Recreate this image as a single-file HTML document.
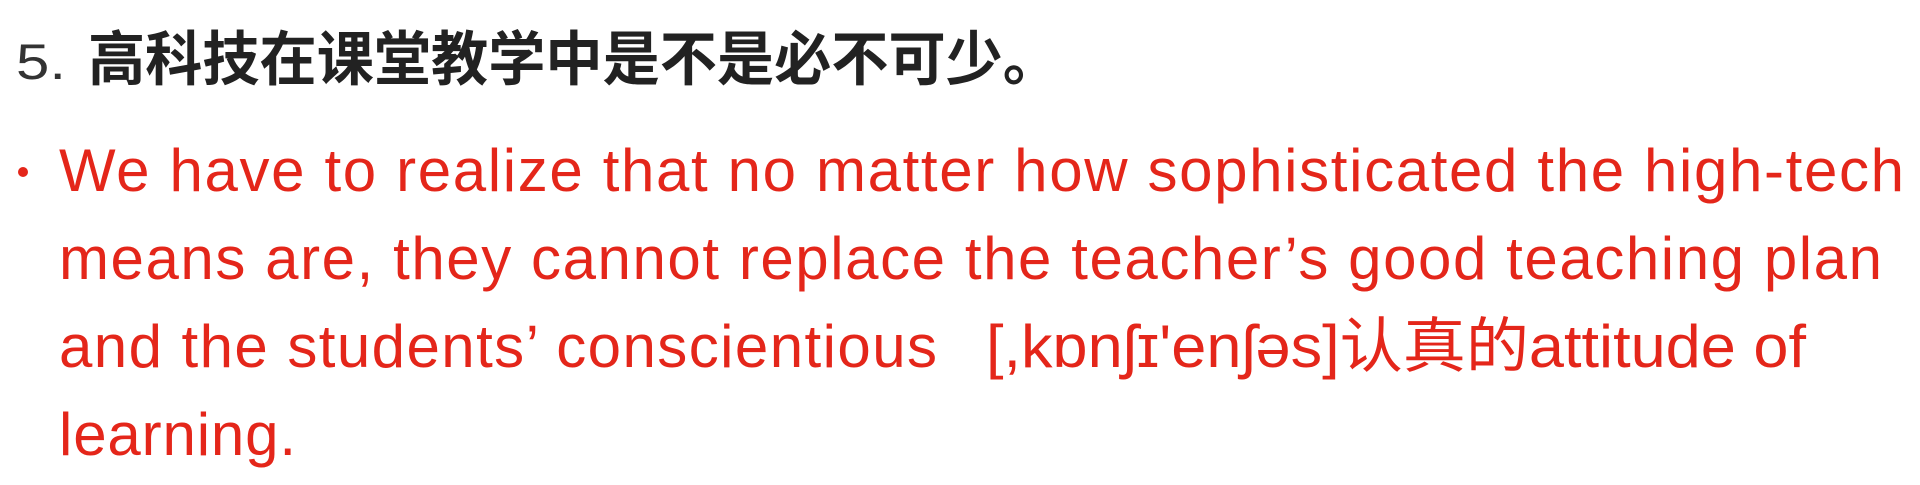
<!DOCTYPE html>
<html><head><meta charset="utf-8"><style>
html,body{margin:0;padding:0;background:#fff;width:1920px;height:485px;overflow:hidden}
svg{display:block}
</style></head><body>
<svg width="1920" height="485" viewBox="0 0 1920 485" xmlns="http://www.w3.org/2000/svg">
<g font-family="'Liberation Sans','Noto Sans CJK SC',sans-serif">
<text x="16" y="79" font-size="50" fill="#333" textLength="50" lengthAdjust="spacingAndGlyphs">5.</text>
<text x="88" y="80" font-size="59" font-weight="bold" fill="#222" textLength="972" lengthAdjust="spacingAndGlyphs">高科技在课堂教学中是不是必不可少。</text>
<g fill="#e4261a" font-size="60">
<circle cx="23" cy="172" r="5"/>
<text x="59" y="191" textLength="1845" lengthAdjust="spacing">We have to realize that no matter how sophisticated the high-tech</text>
<text x="59" y="279" textLength="1823" lengthAdjust="spacing">means are, they cannot replace the teacher’s good teaching plan</text>
<text x="59" y="367" textLength="878" lengthAdjust="spacing">and the students’ conscientious</text>
<text x="986" y="367" textLength="820" lengthAdjust="spacingAndGlyphs">[,kɒnʃɪ'enʃəs]认真的attitude of</text>
<text x="59" y="455" textLength="237" lengthAdjust="spacing">learning.</text>
</g>
</g>
</svg>
</body></html>
